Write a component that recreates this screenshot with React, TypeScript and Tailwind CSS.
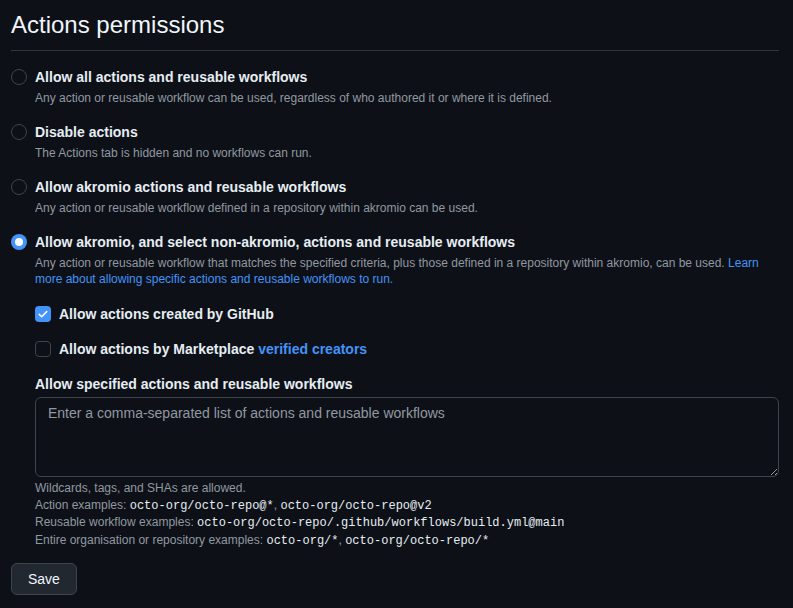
import React, { useState } from "react";

const mono = "font-['Liberation_Mono',ui-monospace,monospace]";

type RadioOption = {
    id: string;
    title: string;
    description: React.ReactNode;
};

const options: RadioOption[] = [
    {
        id: "all",
        title: "Allow all actions and reusable workflows",
        description:
            "Any action or reusable workflow can be used, regardless of who authored it or where it is defined.",
    },
    {
        id: "disable",
        title: "Disable actions",
        description: "The Actions tab is hidden and no workflows can run.",
    },
    {
        id: "local",
        title: "Allow akromio actions and reusable workflows",
        description:
            "Any action or reusable workflow defined in a repository within akromio can be used.",
    },
    {
        id: "selected",
        title: "Allow akromio, and select non-akromio, actions and reusable workflows",
        description: (
            <>
                Any action or reusable workflow that matches the specified criteria, plus those defined in a
                repository within akromio, can be used.{" "}
                <a href="#" className="text-[#4493f8]">
                    Learn more about allowing specific actions and reusable workflows to run.
                </a>
            </>
        ),
    },
];

const Radio: React.FC<{ checked: boolean }> = ({ checked }) =>
    checked ? (
        <span className="mt-[2px] flex h-4 w-4 shrink-0 items-center justify-center rounded-full bg-[#4493f8]">
            <span className="h-2 w-2 rounded-full bg-white" />
        </span>
    ) : (
        <span className="mt-[2px] h-4 w-4 shrink-0 rounded-full border border-[#3d444d] bg-[#0d1117]" />
    );

const Checkbox: React.FC<{ checked: boolean }> = ({ checked }) =>
    checked ? (
        <span className="flex h-4 w-4 shrink-0 items-center justify-center rounded-[4px] bg-[#4493f8]">
            <svg width="12" height="12" viewBox="0 0 16 16" fill="none">
                <path d="M3 8.5l3.2 3.2L13 4.8" stroke="white" strokeWidth="2" strokeLinecap="round" strokeLinejoin="round" />
            </svg>
        </span>
    ) : (
        <span className="h-4 w-4 shrink-0 rounded-[4px] border border-[#3d444d] bg-[#0d1117]" />
    );

export default function App() {
    const [selected, setSelected] = useState("selected");

    return (
        <div className="min-h-[608px] bg-[#0d1117] pl-[11px] pr-[14px] pt-[10px] font-['Liberation_Sans',Arial,sans-serif] text-[#e6edf3]">
            <h2 className="border-b border-[#30363d] pb-[10px] text-2xl leading-[30px] font-normal text-[#f0f6fc]">
                Actions permissions
            </h2>

            <div className="mt-4 flex flex-col gap-4">
                {options.map((opt) => (
                    <label key={opt.id} className="flex cursor-pointer gap-2" onClick={() => setSelected(opt.id)}>
                        <Radio checked={selected === opt.id} />
                        <div>
                            <div className="text-sm leading-5 font-bold">{opt.title}</div>
                            <div className="mt-[3px] text-xs leading-4 text-[#9198a1]">{opt.description}</div>
                        </div>
                    </label>
                ))}
            </div>

            <div className="ml-6">
                <div className="mt-[17px] flex items-center gap-2">
                    <Checkbox checked={true} />
                    <span className="text-sm leading-5 font-bold">Allow actions created by GitHub</span>
                </div>
                <div className="mt-[15px] flex items-center gap-2">
                    <Checkbox checked={false} />
                    <span className="text-sm leading-5 font-bold">
                        Allow actions by Marketplace{" "}
                        <a href="#" className="text-[#4493f8]">
                            verified creators
                        </a>
                    </span>
                </div>

                <div className="mt-[15px] text-sm leading-5 font-bold">Allow specified actions and reusable workflows</div>
                <textarea
                    className="mt-[3px] block h-20 w-full resize-y rounded-md border border-[#3d444d] bg-[#0d1117] px-3 py-[5px] text-sm leading-5 text-[#e6edf3] placeholder:text-[#9198a1] focus:outline-none"
                    placeholder="Enter a comma-separated list of actions and reusable workflows"
                />
                <div className="mt-[3px] text-xs leading-[16.5px] text-[#9198a1]">
                    <div>Wildcards, tags, and SHAs are allowed.</div>
                    <div>
                        Action examples: <code className={`${mono} text-[#e6edf3]`}>octo-org/octo-repo@*</code>,{" "}
                        <code className={`${mono} text-[#e6edf3]`}>octo-org/octo-repo@v2</code>
                    </div>
                    <div>
                        Reusable workflow examples:{" "}
                        <code className={`${mono} text-[#e6edf3]`}>octo-org/octo-repo/.github/workflows/build.yml@main</code>
                    </div>
                    <div>
                        Entire organisation or repository examples:{" "}
                        <code className={`${mono} text-[#e6edf3]`}>octo-org/*</code>,{" "}
                        <code className={`${mono} text-[#e6edf3]`}>octo-org/octo-repo/*</code>
                    </div>
                </div>
            </div>

            <button
                type="button"
                className="mt-[14px] h-8 rounded-md border border-[#3d444d] bg-[#212830] px-4 text-sm text-[#f0f6fc]"
            >
                Save
            </button>
        </div>
    );
}
